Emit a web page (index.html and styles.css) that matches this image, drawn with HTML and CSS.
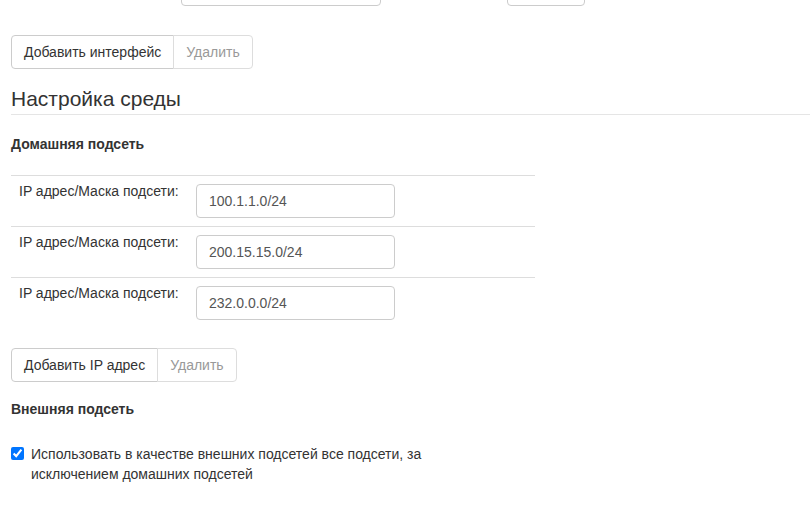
FILE: index.html
```html
<!DOCTYPE html>
<html lang="ru">
<head>
  <meta charset="UTF-8">
  <meta name="viewport" content="width=device-width, initial-scale=1">
  <title>Настройка среды</title>
  <link rel="stylesheet" href="styles.css">
</head>

<body>

  <div class="container">

    <!-- tail of the interface row above -->
    <div class="iface-row">
      <input type="text" class="form-control iface-name">
      <input type="text" class="form-control iface-short">
    </div>

    <div class="btn-group">
      <button type="button" class="btn">Добавить интерфейс</button>
      <button type="button" class="btn" disabled>Удалить</button>
    </div>

    <h3 class="page-header">Настройка среды</h3>

    <h4>Домашняя подсеть</h4>
    <table class="subnet-table">
      <tr>
        <td class="label-cell">IP адрес/Маска подсети:</td>
        <td><input type="text" class="form-control subnet-input" value="100.1.1.0/24"></td>
      </tr>
      <tr>
        <td class="label-cell">IP адрес/Маска подсети:</td>
        <td><input type="text" class="form-control subnet-input" value="200.15.15.0/24"></td>
      </tr>
      <tr>
        <td class="label-cell">IP адрес/Маска подсети:</td>
        <td><input type="text" class="form-control subnet-input" value="232.0.0.0/24"></td>
      </tr>
    </table>

    <div class="btn-group">
      <button type="button" class="btn">Добавить IP адрес</button>
      <button type="button" class="btn" disabled>Удалить</button>
    </div>

    <h4 class="external-title">Внешняя подсеть</h4>
    <label class="checkbox">
      <input type="checkbox" checked>
      <span>Использовать в качестве внешних подсетей все подсети, за исключением домашних подсетей</span>
    </label>

  </div>

</body>
</html>
```

FILE: styles.css
```css
body {
  font-family: 'Liberation Sans', Arial, sans-serif;
  font-size: 14px;
  line-height: 20px;
  color: #333;
  background-color: #fff;
  margin: 0;
}

.container {
  padding-left: 11px;
}

.form-control {
  height: 34px;
  padding: 6px 12px;
  border: 1px solid #ccc;
  border-radius: 4px;
  box-sizing: border-box;
  font-family: inherit;
  font-size: 14px;
  line-height: 20px;
  color: #555;
  background-color: #fff;
}

.iface-row {
  display: flex;
  margin-top: -28px;
  padding-left: 170px;
}

.iface-name {
  width: 200px;
}

.iface-short {
  width: 78px;
  margin-left: 126px;
}

.btn-group {
  display: flex;
  margin-top: 29px;
}

.btn {
  height: 34px;
  padding: 6px 12px;
  font-family: inherit;
  font-size: 14px;
  line-height: 20px;
  color: #333;
  background-color: #fff;
  border: 1px solid #ccc;
  cursor: pointer;
}

.btn:first-child {
  border-radius: 4px 0 0 4px;
}

.btn:last-child {
  border-radius: 0 4px 4px 0;
  margin-left: -1px;
}

.btn[disabled] {
  color: #999;
  border-color: #ddd;
  cursor: not-allowed;
}

.page-header {
  font-size: 21px;
  font-weight: normal;
  line-height: 24px;
  margin: 18px 0 0 0;
  padding-bottom: 3px;
  border-bottom: 1px solid #e5e5e5;
}

h4 {
  font-size: 14px;
  font-weight: bold;
  line-height: 20px;
  margin: 19px 0 0 0;
}

.subnet-table {
  border-collapse: collapse;
  width: 524px;
  margin-top: 21px;
}

.subnet-table td {
  border-top: 1px solid #ddd;
  padding: 8px;
  vertical-align: top;
}

.subnet-table .label-cell {
  width: 161px;
  padding-top: 5px;
}

.subnet-input {
  width: 199px;
  display: block;
}

.subnet-table + .btn-group {
  margin-top: 20px;
}

.external-title {
  margin-top: 17px;
}

.checkbox {
  display: flex;
  align-items: flex-start;
  margin-top: 25px;
}

.checkbox input {
  width: 13px;
  height: 13px;
  margin: 3px 7px 0 0;
}

.checkbox span {
  width: 410px;
}
```
